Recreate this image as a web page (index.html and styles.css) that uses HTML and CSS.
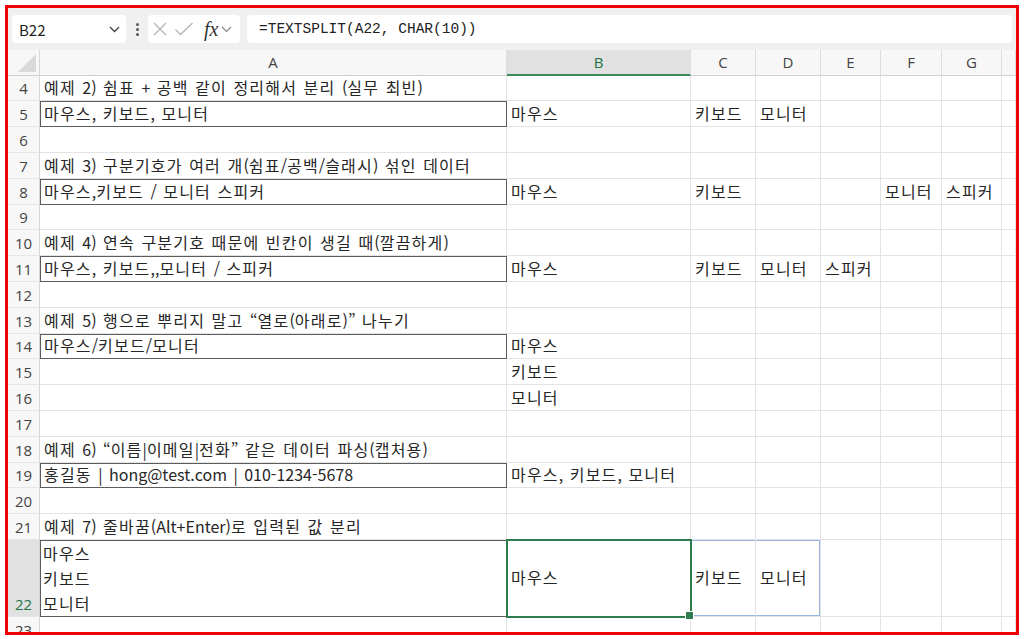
FILE: index.html
```html
<!DOCTYPE html>
<html lang="ko">
<head>
  <meta charset="UTF-8">
  <title>TEXTSPLIT 예제</title>
  <link rel="stylesheet" href="styles.css">
</head>
<body>

<div class="frame">

  <!-- Name box + formula bar -->
  <div class="formula-bar">
    <div class="name-box">
      <span>B22</span>
      <svg class="chev" width="11" height="7" viewBox="0 0 11 7"><path d="M1 1l4.5 4.5L10 1" fill="none" stroke="#444" stroke-width="1.4"/></svg>
    </div>
    <div class="kebab"><i></i><i></i><i></i></div>
    <div class="fx-tools">
      <svg width="16" height="16" viewBox="0 0 16 16"><path d="M2 2l12 12M14 2L2 14" stroke="#b5b5b5" stroke-width="1.3"/></svg>
      <svg width="20" height="16" viewBox="0 0 20 16"><path d="M1.5 8.5l5 5L18.5 2" fill="none" stroke="#b5b5b5" stroke-width="1.3"/></svg>
      <span class="fx">fx</span>
      <svg width="11" height="7" viewBox="0 0 11 7"><path d="M1 1l4.5 4.5L10 1" fill="none" stroke="#888" stroke-width="1.2"/></svg>
    </div>
    <div class="formula-input">=TEXTSPLIT(A22, CHAR(10))</div>
  </div>

  <!-- Worksheet -->
  <div class="sheet" id="sheet"></div>

</div>

<script>
  const columns = ["A", "B", "C", "D", "E", "F", "G", ""];

  const rows = [
    { n: 4, cells: { A: "예제 2) 쉼표 + 공백 같이 정리해서 분리 (실무 최빈)" } },
    { n: 5, box: true, cells: { A: "마우스, 키보드, 모니터", B: "마우스", C: "키보드", D: "모니터" } },
    { n: 6 },
    { n: 7, cells: { A: "예제 3) 구분기호가 여러 개(쉼표/공백/슬래시) 섞인 데이터" } },
    { n: 8, box: true, cells: { A: "마우스,키보드 / 모니터 스피커", B: "마우스", C: "키보드", F: "모니터", G: "스피커" } },
    { n: 9 },
    { n: 10, cells: { A: "예제 4) 연속 구분기호 때문에 빈칸이 생길 때(깔끔하게)" } },
    { n: 11, box: true, cells: { A: "마우스, 키보드,,모니터 / 스피커", B: "마우스", C: "키보드", D: "모니터", E: "스피커" } },
    { n: 12 },
    { n: 13, cells: { A: "예제 5) 행으로 뿌리지 말고 “열로(아래로)” 나누기" } },
    { n: 14, box: true, cells: { A: "마우스/키보드/모니터", B: "마우스" } },
    { n: 15, cells: { B: "키보드" } },
    { n: 16, cells: { B: "모니터" } },
    { n: 17 },
    { n: 18, cells: { A: "예제 6) “이름|이메일|전화” 같은 데이터 파싱(캡처용)" } },
    { n: 19, box: true, cells: { A: "홍길동 | hong@test.com | 010-1234-5678", B: "마우스, 키보드, 모니터" } },
    { n: 20 },
    { n: 21, cells: { A: "예제 7) 줄바꿈(Alt+Enter)로 입력된 값 분리" } },
    { n: 22, box: true, active: true, cells: { A: "마우스\n키보드\n모니터", B: "마우스", C: "키보드", D: "모니터" } },
    { n: 23 }
  ];

  const sheet = document.getElementById("sheet");

  // Hangul runs get their own span so they can be spaced a bit wider
  function fill(target, text) {
    text.split(/([가-힣]+)/).forEach(part => {
      if (!part) return;
      if (/[가-힣]/.test(part)) {
        const span = document.createElement("span");
        span.className = "ko";
        span.textContent = part;
        target.appendChild(span);
      } else {
        target.appendChild(document.createTextNode(part));
      }
    });
  }

  function cell(className, text) {
    const div = document.createElement("div");
    div.className = className;
    if (text) {
      const inner = document.createElement("span");
      inner.className = "txt";
      fill(inner, text);
      div.appendChild(inner);
    }
    sheet.appendChild(div);
    return div;
  }

  // header row
  cell("corner");
  columns.forEach(col => {
    cell("col-head" + (col === "B" ? " selected" : ""), col);
  });

  // body rows
  rows.forEach(row => {
    cell("row-head" + (row.active ? " selected" : ""), String(row.n));
    columns.forEach(col => {
      const value = row.cells ? row.cells[col] : "";
      let cls = "cell";
      if (col === "A" && row.box) cls += " boxed";
      if (col === "A" && row.active) cls += " wrap";
      if (row.active && col === "B") cls += " active";
      if (row.active && col === "C") cls += " spill";
      if (row.active && col === "D") cls += " spill spill-end";
      cell(cls, value);
    });
  });
</script>

</body>
</html>
```

FILE: styles.css
```css
* {
  box-sizing: border-box;
}

body {
  margin: 0;
  background: #fff;
  font-family: "Noto Sans CJK KR", "Noto Sans", sans-serif;
  color: #1f1f1f;
}

.frame {
  margin: 5px;
  width: 1014px;
  height: 630px;
  border: 3px solid #f50000;
  display: flex;
  flex-direction: column;
  overflow: hidden;
}

/* Formula bar */
.formula-bar {
  height: 42px;
  flex-shrink: 0;
  background: #f0f0f0;
  display: flex;
  align-items: flex-start;
  padding: 7px 4px 0 4px;
}

.name-box,
.fx-tools,
.formula-input {
  height: 28px;
  background: #fff;
  border-radius: 4px;
  display: flex;
  align-items: center;
}

.name-box {
  width: 114px;
  padding: 0 6px 0 7px;
  justify-content: space-between;
  font-size: 15px;
}

.kebab {
  width: 22px;
  height: 28px;
  display: flex;
  flex-direction: column;
  align-items: center;
  justify-content: center;
  gap: 2px;
}

.kebab i {
  width: 3px;
  height: 3px;
  border-radius: 50%;
  background: #555;
}

.fx-tools {
  width: 92px;
  padding: 0 3px 0 4px;
  gap: 6px;
}

.fx {
  font-family: "Liberation Serif", serif;
  font-style: italic;
  font-size: 20px;
  color: #333;
  margin-left: 4px;
  margin-right: -3px;
  line-height: 1;
}

.formula-input {
  flex: 1;
  margin-left: 7px;
  padding-left: 12px;
  font-family: "Liberation Mono", monospace;
  font-size: 14.5px;
  color: #222;
}

/* Worksheet grid */
.sheet {
  flex: 1;
  display: grid;
  grid-template-columns: 32px 467px 184px 65px 65px 60px 61px 60px 1fr;
  grid-template-rows: 25.6px repeat(18, 25.8px) 77px 26px;
  overflow: hidden;
  background: #fff;
}

.corner {
  background: #f7f7f7;
  border-right: 1px solid #d6d6d6;
  border-bottom: 1px solid #cfcfcf;
  position: relative;
}

.corner::after {
  content: "";
  position: absolute;
  right: 3px;
  bottom: 3px;
  border-style: solid;
  border-width: 0 0 18px 18px;
  border-color: transparent transparent #dadada transparent;
}

.col-head {
  background: #f7f7f7;
  border-right: 1px solid #dedede;
  border-bottom: 1px solid #cfcfcf;
  display: flex;
  align-items: center;
  justify-content: center;
  font-family: "Open Sans", sans-serif;
  font-size: 15px;
  color: #444;
}

.col-head.selected {
  background: #e1e1e1;
  color: #217346;
  border-bottom: 2px solid #3c8a5c;
}

.row-head {
  background: #f7f7f7;
  border-right: 1px solid #d6d6d6;
  border-bottom: 1px solid #e6e6e6;
  display: flex;
  align-items: flex-end;
  justify-content: center;
  padding-bottom: 2px;
  font-family: "Open Sans", sans-serif;
  font-size: 15px;
  color: #444;
  line-height: 20px;
}

.row-head.selected {
  background: #e1e1e1;
  color: #217346;
}

.cell {
  border-right: 1px solid #e3e3e3;
  border-bottom: 1px solid #e3e3e3;
  display: flex;
  align-items: center;
  padding: 0 4px 1px 4px;
  font-size: 16px;
  white-space: nowrap;
  word-spacing: 2px;
  line-height: 20px;
  color: #262626;
}

.cell .ko {
  letter-spacing: 1.2px;
}

.cell.boxed {
  outline: 1px solid #5c5c5c;
  outline-offset: -1px;
}

.cell.wrap {
  white-space: pre-line;
  line-height: 25px;
  padding: 1px 3px 0 3px;
}

.cell.active {
  position: relative;
  outline: 2px solid #2f7d4f;
  outline-offset: -1px;
  z-index: 2;
}

.cell.active::after {
  content: "";
  position: absolute;
  right: -4px;
  bottom: -4px;
  width: 7px;
  height: 7px;
  background: #2f7d4f;
  border: 1px solid #fff;
}

.cell.spill {
  box-shadow: inset 0 1px #94b7e0, inset 0 -1px #94b7e0;
}

.cell.spill-end {
  box-shadow: inset 0 1px #94b7e0, inset 0 -1px #94b7e0, inset -1px 0 #94b7e0;
}
```
